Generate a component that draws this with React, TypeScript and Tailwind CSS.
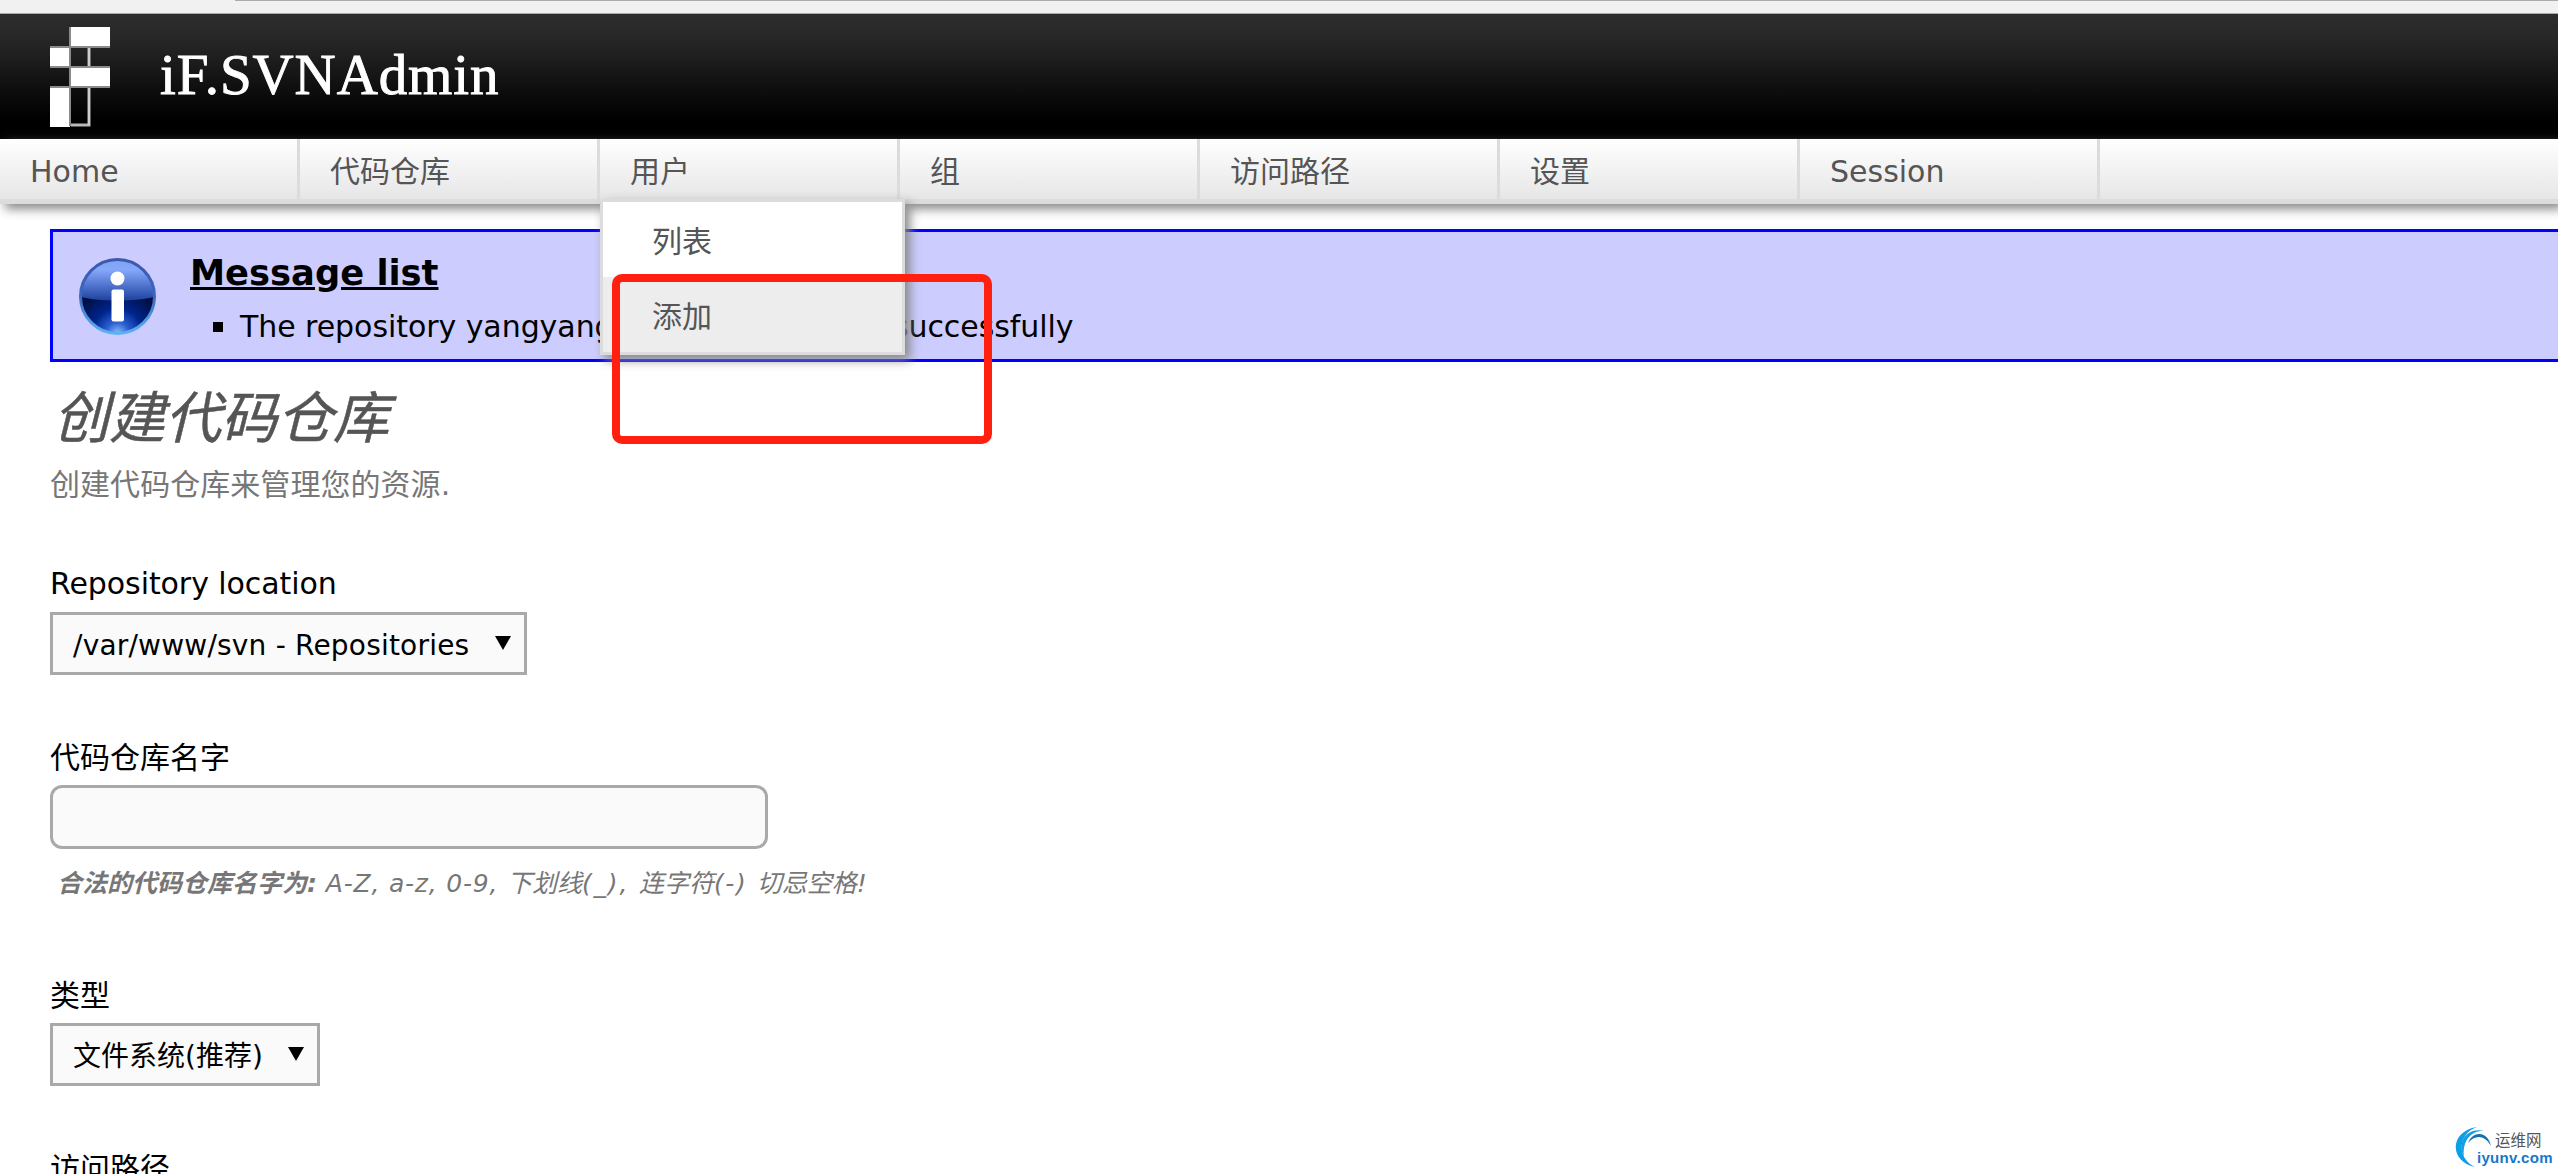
const NAV_ITEMS = ['Home', '代码仓库', '用户', '组', '访问路径', '设置', 'Session']
const USER_MENU = [
  { label: '列表', active: false },
  { label: '添加', active: true }
]

function Logo() {
  return (
    <svg width="62" height="100" viewBox="0 0 62 100" className="mt-[13px] shrink-0">
      <path d="M20 0H60V20H20ZM0 20H20V40H0ZM20 40H60V60H20ZM0 60H20V100H0Z" fill="#fff" />
      <path d="M0 20H60M0 40H60M0 60H60" stroke="#8a8a8a" strokeWidth="2" fill="none" />
      <path d="M20 0V99" stroke="#8a8a8a" strokeWidth="2" fill="none" />
      <path d="M39 21V39M39 61V98H21" stroke="#b8b8b8" strokeWidth="3" fill="none" />
      <path d="M39 21V39M39 61V98" stroke="#e4e4e4" strokeWidth="1" fill="none" />
    </svg>
  )
}

function InfoIcon() {
  return (
    <svg width="78" height="80" viewBox="0 0 78 80" className="ml-[26px] mt-[25px] shrink-0">
      <defs>
        <linearGradient id="ball-top" x1="0" y1="0" x2="0" y2="1">
          <stop offset="0" stopColor="#7ea2f0" />
          <stop offset="0.25" stopColor="#86a8fb" />
          <stop offset="1" stopColor="#1c429f" />
        </linearGradient>
        <radialGradient id="ball-bottom" cx="0.5" cy="1" r="0.62">
          <stop offset="0" stopColor="#8cc0ff" />
          <stop offset="0.25" stopColor="#2a5fd0" />
          <stop offset="0.55" stopColor="#00248c" />
          <stop offset="1" stopColor="#000f42" />
        </radialGradient>
        <linearGradient id="ball-ring" x1="0" y1="0" x2="0" y2="1">
          <stop offset="0" stopColor="#3b58ac" />
          <stop offset="0.5" stopColor="#3c68c0" />
          <stop offset="1" stopColor="#5cb2f4" />
        </linearGradient>
      </defs>
      <circle cx="38.500" cy="39.500" r="37" fill="url(#ball-bottom)" />
      <path d="M1.500 39.500A37 37 0 0 1 75.500 39.500C62 45 15 45 1.500 39.500Z" fill="url(#ball-top)" />
      <circle cx="38.500" cy="39.500" r="37" fill="none" stroke="url(#ball-ring)" strokeWidth="3" />
      <circle cx="38.500" cy="21.500" r="7" fill="#fff" />
      <rect x="32.500" y="32.500" width="12.500" height="32" rx="2" fill="#fff" />
    </svg>
  )
}

function Header() {
  return (
    <header>
      <div className="h-[14px] border-b border-[#aaa] bg-[#f1f1f1]">
        <div className="ml-[235px] h-px bg-[#aaa]" />
      </div>
      <div className="flex h-[125px] bg-[linear-gradient(#2d2d2d,#282828_18%,#000_84%)] pl-[50px]">
        <Logo />
        <h1 className="ml-[48px] mt-[18px] font-['Liberation_Serif',serif] text-[57px] leading-[86px] tracking-[0.9px] text-white [-webkit-text-stroke:0.9px_white]">
          iF.SVNAdmin
        </h1>
      </div>
    </header>
  )
}

function Nav() {
  return (
    <nav className="relative z-10 flex h-[65px] border-b-[5px] border-[#dcdcdc] bg-linear-to-b from-white to-[#e6e6e6] shadow-[5px_5px_10px_#888]">
      {NAV_ITEMS.map((item) => (
        <div key={item} className="relative w-[300px] border-r-[3px] border-[#dcdcdc] pl-[30px] leading-[65px] text-[#555]">
          {item}
          {item === '用户' && (
            <ul className="absolute left-0 top-[60px] w-[305px] border-[3px] border-[#dcdcdc] bg-white shadow-[5px_5px_10px_#888]">
              {USER_MENU.map(({ label, active }) => (
                <li
                  key={label}
                  className={`h-[75px] pl-[49px] leading-[79px] ${active ? 'bg-[#ededed]' : 'bg-white'}`}
                >
                  {label}
                </li>
              ))}
            </ul>
          )}
        </div>
      ))}
    </nav>
  )
}

function MessageBox() {
  return (
    <section className="ml-[50px] mt-[25px] flex h-[133px] border-[3px] border-r-0 border-[#0000ff] bg-[#ccccff]">
      <InfoIcon />
      <div className="ml-[33px]">
        <h2 className="mt-[18px] text-[35.3px] font-bold leading-[46px] underline">Message list</h2>
        <ul className="mt-[11px] pl-[23px]">
          <li className="flex items-center whitespace-nowrap leading-[40px] tracking-[-0.06px]">
            <span className="mr-[17px] size-[10px] bg-black" />
            The repository yangyang has been created successfully
          </li>
        </ul>
      </div>
    </section>
  )
}

function SelectBox({ value, className }: { value: string; className: string }) {
  return (
    <div
      className={`flex h-[63px] items-center justify-between border-[3px] border-[#a9a9a9] bg-[#fafafa] pl-[20px] pr-[13px] text-[28px] ${className}`}
    >
      <span className="whitespace-nowrap pt-[5px]">{value}</span>
      <svg width="16" height="14" viewBox="0 0 16 14" className="-mt-px">
        <path d="M0 0H16L8 14Z" />
      </svg>
    </div>
  )
}

function Watermark() {
  return (
    <div className="absolute bottom-[6px] right-[5px] h-[41px] w-[98px]">
      <svg width="40" height="42" viewBox="0 0 40 42" className="absolute left-0 top-0" fill="none">
        <path d="M20 40C-6 35 -6 4 22 0C4 6 0 30 20 40Z" fill="#0c9fe8" />
        <path d="M9 30C1 14 13 0 29 4C16 3 7 14 9 30Z" fill="#12a0e0" />
        <path d="M13 16C18 3 33 4 36 19C30 8 20 7 13 16Z" fill="#1670b0" />
      </svg>
      <span className="absolute left-[40px] top-0 text-[15.500px] leading-[28px] text-[#555]">运维网</span>
      <span className="absolute left-[22px] top-[22px] font-['Liberation_Sans',sans-serif] text-[15px] font-bold leading-[18px] tracking-[0.3px] text-[#1478cc]">
        iyunv.com
      </span>
    </div>
  )
}

export default function App() {
  return (
    <div className="relative h-[1174px] w-[2558px] overflow-hidden bg-white font-['DejaVu_Sans','Noto_Sans_CJK_SC',sans-serif] text-[30px] text-black">
      <Header />
      <Nav />
      <MessageBox />

      <main className="flex flex-col items-start pl-[50px]">
        <h2 className="mt-[14px] pl-[3px] font-['Noto_Sans_CJK_SC',sans-serif] text-[56px] italic leading-[76px] text-[#555] [-webkit-text-stroke:0.5px_#555]">
          创建代码仓库
        </h2>
        <p className="mt-[11px] leading-[44px] tracking-[0.05px] text-[#777]">创建代码仓库来管理您的资源.</p>

        <label className="mt-[55px] leading-[44px] tracking-[-0.07px]">Repository location</label>
        <div className="mt-[6px]">
          <SelectBox value="/var/www/svn - Repositories" className="w-[477px] tracking-[0.2px]" />
        </div>

        <label className="mt-[61px] leading-[44px]">代码仓库名字</label>
        <input className="mt-[5px] h-[64px] w-[718px] rounded-[12px] border-[3px] border-[#a9a9a9] bg-[#fafafa]" />
        <p className="mt-[15px] whitespace-pre pl-[7px] text-[25px] italic leading-[40px] text-[#777]">
          <b>合法的代码仓库名字为:</b>
          <span className="tracking-[0.8px]"> A-Z, a-z, 0-9, </span>
          下划线
          <span className="tracking-[1.8px]">(_), </span>
          连字符
          <span className="tracking-[1.6px]">(-) </span>
          切忌空格!
        </p>

        <label className="mt-[70px] leading-[44px]">类型</label>
        <div className="mt-[5px]">
          <SelectBox value="文件系统(推荐)" className="w-[270px]" />
        </div>

        <label className="mt-[61px] leading-[44px]">访问路径</label>
      </main>

      {/* 红色标注框 */}
      <div className="absolute left-[612px] top-[274px] z-20 h-[170px] w-[380px] rounded-[10px] border-[8px] border-[#ff2010]" />
      <Watermark />
    </div>
  )
}
